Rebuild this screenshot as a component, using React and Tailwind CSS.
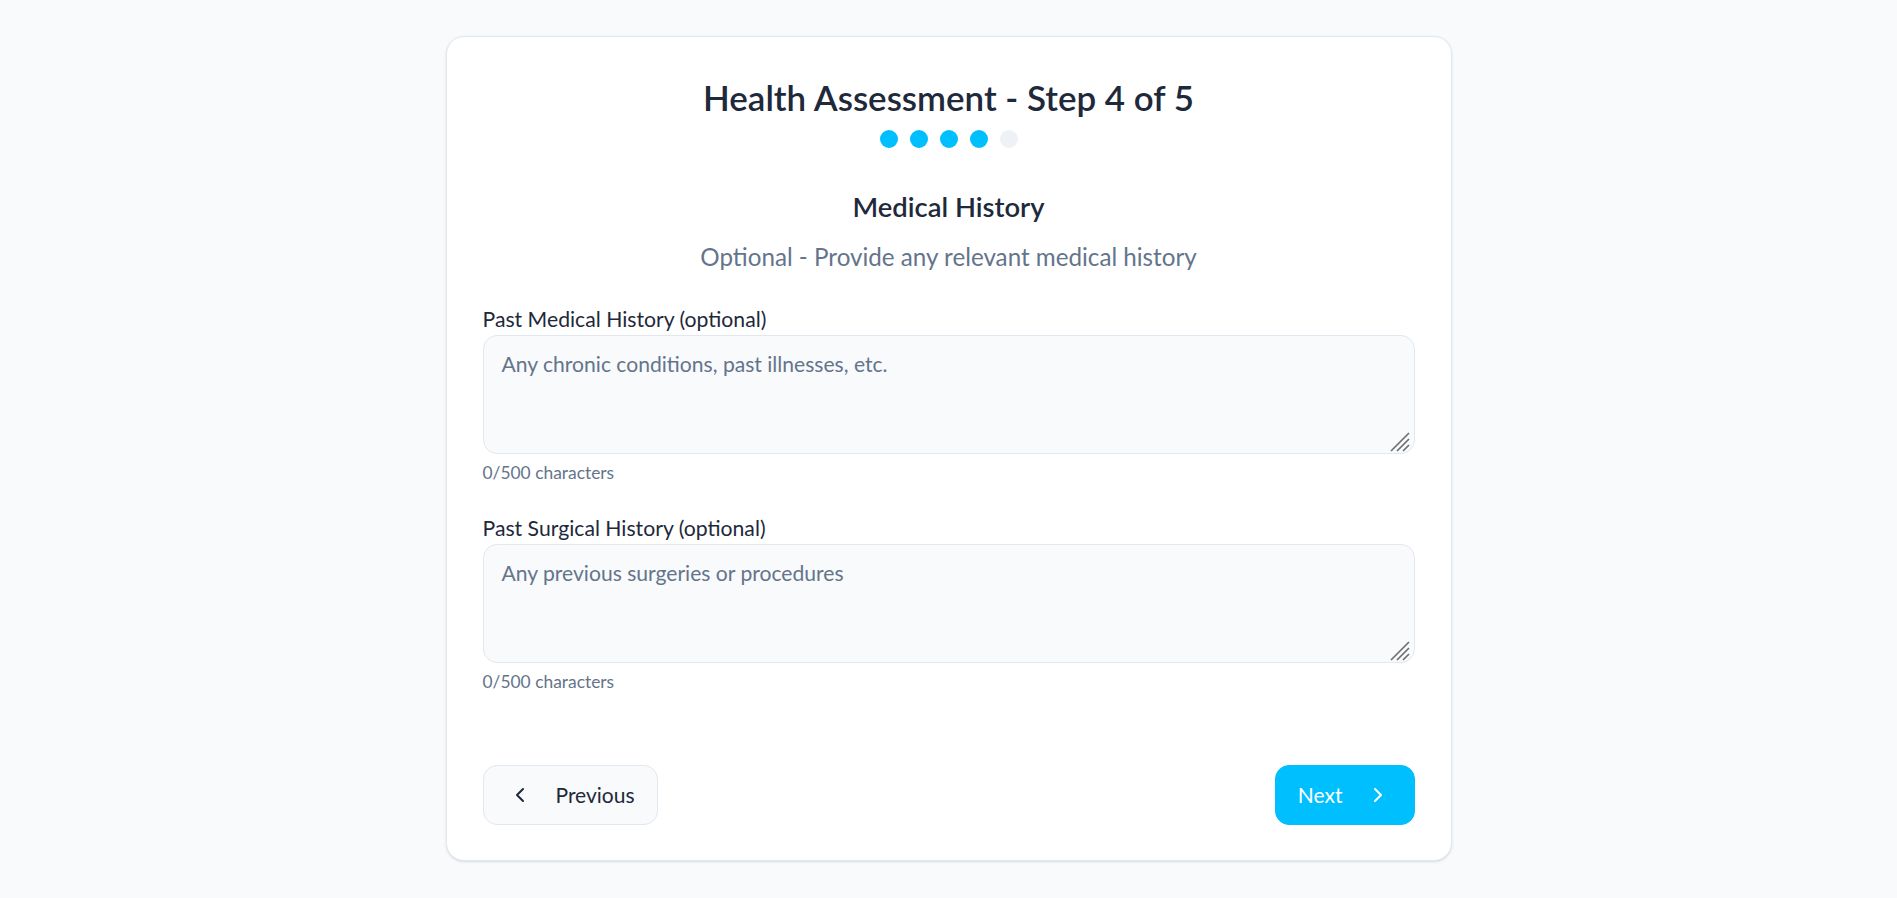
import { ChevronLeft, ChevronRight } from 'lucide-react'

const FONT = { fontFamily: 'Lato, "Open Sans", sans-serif' }

// Windows-style resize grip drawn over the textarea corner
function Grip() {
  return (
    <svg className="pointer-events-none absolute bottom-[1px] right-[3px]" width="24" height="24" viewBox="0 0 24 24">
      <g stroke="#707070" strokeWidth="1.7" strokeLinecap="butt">
        <line x1="3" y1="22" x2="21" y2="4" />
        <line x1="9" y1="22" x2="21" y2="10" />
        <line x1="15" y1="22" x2="21" y2="16" />
      </g>
    </svg>
  )
}

function Field({ label, placeholder }) {
  return (
    <div className="flex flex-col">
      <label className="text-[21.2px] leading-[28px] text-[#1e293b]">{label}</label>
      <div className="relative mt-[2px]">
        <textarea
          placeholder={placeholder}
          className="block h-[119px] w-full resize-none rounded-[14px] border border-[#e2e8f0] bg-[#f8fafc] px-[18px] py-[12px] text-[21.1px] leading-[32px] text-[#1e293b] outline-none placeholder:text-[#64748b]"
        />
        <Grip />
      </div>
      <p className="mt-[8px] text-[17.4px] leading-[22px] text-[#64748b]">0/500 characters</p>
    </div>
  )
}

export default function App() {
  const steps = [1, 2, 3, 4, 5]

  return (
    <div className="min-h-screen bg-[#f8fafc] pt-[36px]" style={FONT}>
      <div className="mx-auto w-[1006px] rounded-[18px] border border-[#e2e8f0] bg-white px-[36px] pb-[35px] pt-[39px] shadow-sm">

        {/* Header + progress dots */}
        <h1 className="text-center text-[34.9px] font-semibold leading-[44px] text-[#1e293b]">
          Health Assessment - Step 4 of 5
        </h1>
        <div className="mt-[10px] flex justify-center gap-[12px]">
          {steps.map((s) => (
            <span key={s}
              className={s <= 4 ? 'h-[18px] w-[18px] rounded-full bg-[#00bfff]' : 'h-[18px] w-[18px] rounded-full bg-[#eef2f7]'} />
          ))}
        </div>

        <h2 className="mt-[41px] text-center text-[27.4px] font-semibold leading-[36px] text-[#1e293b]">
          Medical History
        </h2>
        <p className="mt-[17px] text-center text-[24.2px] leading-[30px] text-[#64748b]">
          Optional - Provide any relevant medical history
        </p>

        <div className="mt-[33px] flex flex-col gap-[30px]">
          <Field label="Past Medical History (optional)" placeholder="Any chronic conditions, past illnesses, etc." />
          <Field label="Past Surgical History (optional)" placeholder="Any previous surgeries or procedures" />
        </div>

        {/* Nav buttons */}
        <div className="mt-[72px] flex items-center justify-between">
          <button className="flex h-[60px] items-center gap-6 rounded-[14px] border border-[#e2e8f0] bg-[#f8fafc] pl-6 pr-[22px] text-[21px] text-[#1e293b]">
            <ChevronLeft size={24} strokeWidth={2} />
            Previous
          </button>
          <button className="flex h-[60px] items-center gap-[23px] rounded-[14px] border border-[#00bfff] bg-[#00bfff] pl-[22px] pr-6 text-[21px] text-white">
            Next
            <ChevronRight size={24} strokeWidth={2} />
          </button>
        </div>
      </div>
    </div>
  )
}
